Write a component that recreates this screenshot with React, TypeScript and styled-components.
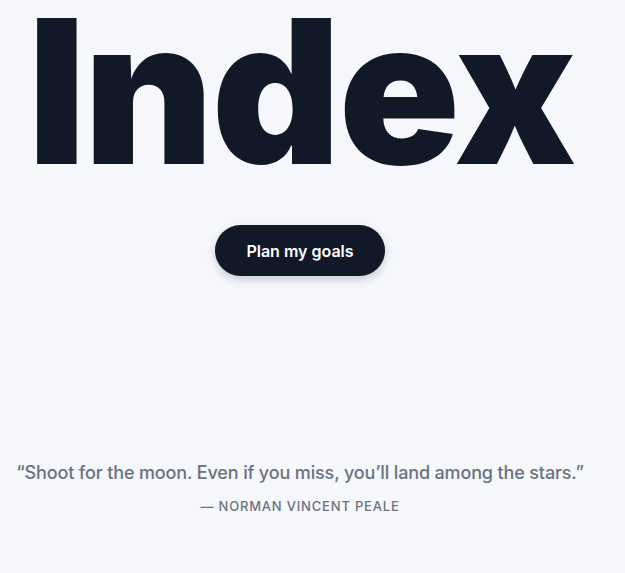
import React from "react";
import styled, { createGlobalStyle } from "styled-components";

const GlobalStyle = createGlobalStyle`
  html, body {
    margin: 0;
    padding: 0;
    background: #f5f7fa;
  }
  body {
    font-family: Inter, "Noto Sans", sans-serif;
  }
`;

const Page = styled.main`
  width: 600px;
  min-height: 573px;
  display: flex;
  flex-direction: column;
  align-items: center;
  box-sizing: border-box;
  overflow: hidden;
`;

const Title = styled.h1`
  margin: -9px 0 0;
  font-size: 200px;
  font-weight: 900;
  line-height: 1;
  letter-spacing: -0.01em;
  color: #111827;
  transform: translateX(1px);
`;

const GoalButton = styled.button`
  margin-top: 34px;
  height: 51px;
  padding: 0 31px;
  border: none;
  border-radius: 26px;
  background: #111827;
  color: #ffffff;
  font-family: Inter, "Noto Sans", sans-serif;
  font-size: 16px;
  font-weight: 600;
  box-shadow: 0 4px 8px rgba(17, 24, 39, 0.18);
  cursor: pointer;
`;

const Quote = styled.blockquote`
  margin: 185px 0 0;
  display: flex;
  flex-direction: column;
  align-items: center;
  gap: 13px;
`;

const QuoteText = styled.p`
  margin: 0;
  font-size: 18px;
  font-weight: 500;
  line-height: 24px;
  letter-spacing: -0.008em;
  color: #6b7280;
  white-space: nowrap;
`;

const Author = styled.cite`
  font-style: normal;
  font-size: 13px;
  font-weight: 500;
  letter-spacing: 0.062em;
  text-transform: uppercase;
  color: #6b7280;
`;

export default function App() {
  return (
    <>
      <GlobalStyle />
      <Page>
        <Title>Index</Title>
        <GoalButton>Plan my goals</GoalButton>
        <Quote>
          <QuoteText>
            “Shoot for the moon. Even if you miss, you’ll land among the stars.”
          </QuoteText>
          <Author>— Norman Vincent Peale</Author>
        </Quote>
      </Page>
    </>
  );
}
